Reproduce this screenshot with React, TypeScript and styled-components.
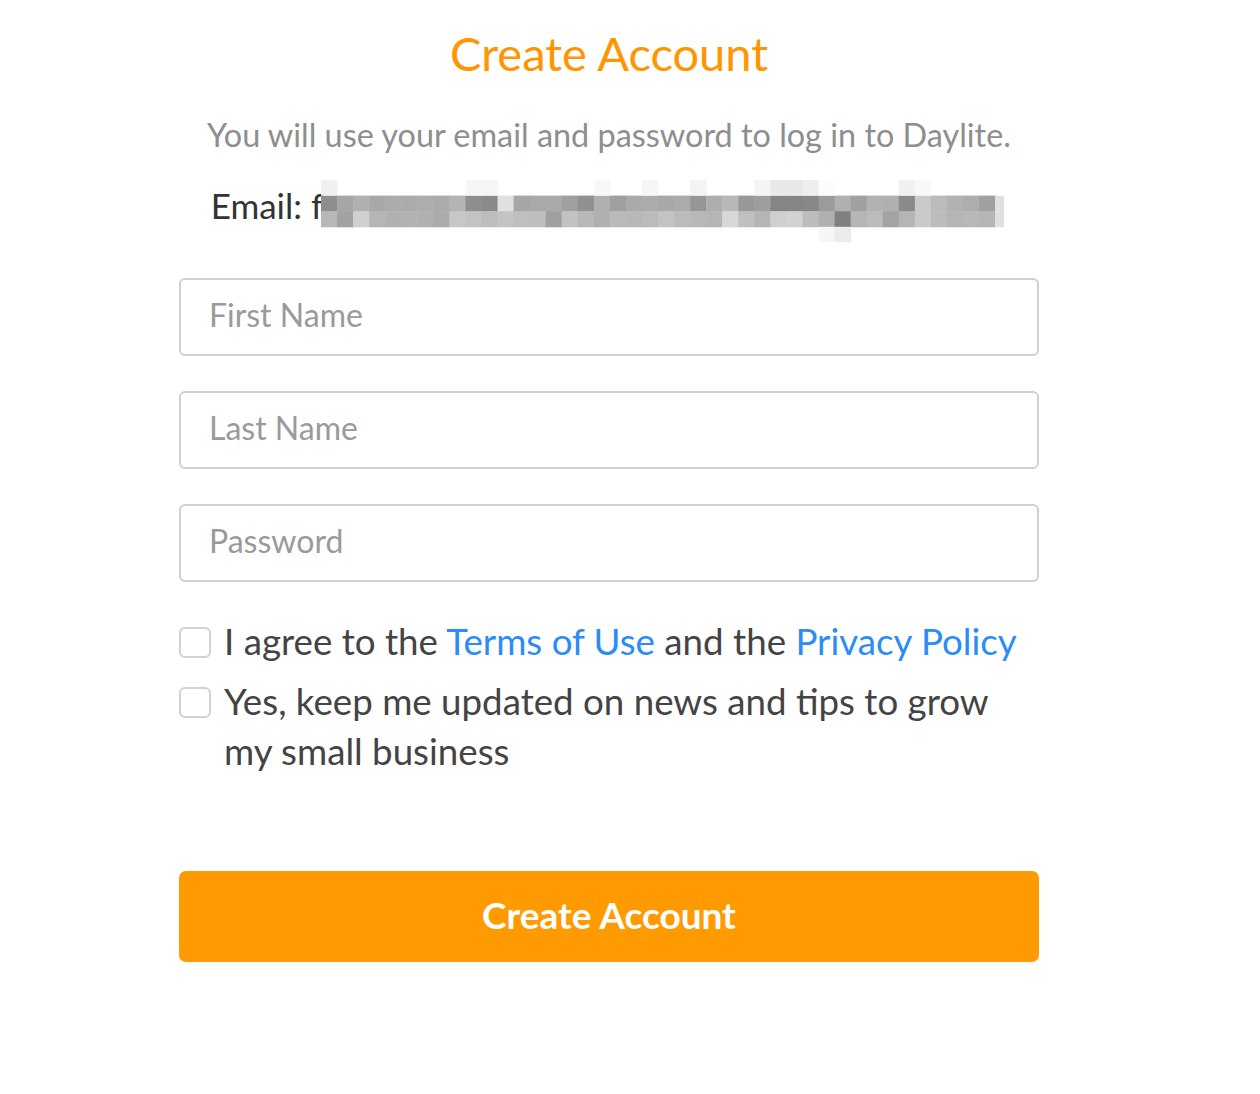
import React from "react";
import styled, { createGlobalStyle } from "styled-components";

const Global = createGlobalStyle`
  html, body { margin: 0; padding: 0; background: #ffffff; }
  body { font-family: "Lato", "Noto Sans", sans-serif; }
  * { box-sizing: border-box; }
`;

const Page = styled.div`
  width: 1218px;
  display: flex;
  flex-direction: column;
  align-items: center;
  padding-top: 23px;
`;

const Title = styled.h1`
  margin: 0;
  height: 60px;
  line-height: 60px;
  font-size: 47px;
  font-weight: 400;
  color: #ff9500;
  text-align: center;
`;

const Subtitle = styled.p`
  margin: 32px 0 0;
  height: 40px;
  line-height: 40px;
  font-size: 32.4px;
  color: #8e8e8e;
  text-align: center;
`;

const EmailRow = styled.div`
  margin-top: 30px;
  height: 40px;
  display: flex;
  align-items: center;
  font-size: 35px;
  color: #333;
`;

const EmailLabel = styled.span`
  line-height: 40px;
  white-space: pre;
`;

const Redacted = styled.svg`
  display: block;
  margin-left: -2px;
  margin-top: 12px;
  flex: none;
`;

const Form = styled.form`
  width: 860px;
  margin-top: 53px;
  display: flex;
  flex-direction: column;
`;

const Field = styled.input`
  width: 100%;
  height: 78px;
  border: 2px solid #d0d0d0;
  border-radius: 6px;
  padding: 0 28px 5px 28px;
  font-family: inherit;
  font-size: 32px;
  color: #333;
  outline: none;
  & + & { margin-top: 35px; }
  &::placeholder { color: #9a9a9a; }
`;

const Checks = styled.div`
  margin-top: 34px;
  display: flex;
  flex-direction: column;
  gap: 10px;
`;

const CheckRow = styled.label`
  display: flex;
  align-items: flex-start;
  gap: 13px;
  font-size: 36.7px;
  line-height: 50px;
  color: #444;
`;

const Box = styled.input`
  appearance: none;
  -webkit-appearance: none;
  flex: none;
  width: 32px;
  height: 31px;
  margin: 11px 0 0;
  border: 2px solid #d2d2d2;
  border-radius: 6px;
  background: #fff;
`;

const Link = styled.a`
  color: #2b8cf5;
  text-decoration: none;
`;

const Submit = styled.button`
  margin-top: 95px;
  width: 100%;
  height: 91px;
  border: none;
  border-radius: 7px;
  background: #ff9a00;
  color: #fff;
  font-family: inherit;
  font-size: 37px;
  font-weight: 700;
  padding-bottom: 6px;
`;

const row1 = [0x8e,0xa6,0xb0,0xa8,0xac,0xab,0xad,0xab,0xb4,0x8e,0x8a,0xe0,0xa6,0xa9,0xaa,0x9f,0x90,0xb0,0x9f,0xaa,0xab,0xa8,0xab,0x96,0xae,0xb8,0x98,0x9e,0x85,0x85,0x87,0x9b,0xb0,0xa0,0xb2,0xb0,0x8a,0xc9,0xbb,0xb2,0xae,0xa0,0xe0];
const row2 = [0xb8,0xa2,0xd0,0xb5,0xb0,0xb2,0xb0,0xab,0xc7,0xc3,0xbd,0xc3,0xbf,0xbe,0xa0,0xc2,0xb8,0xb0,0xba,0xb8,0xbb,0xc3,0xbb,0xb8,0xb5,0xd8,0xc0,0xb5,0xcf,0xd2,0xbc,0xb0,0x80,0xb5,0xbb,0xa3,0xb5,0xca,0xbc,0xb5,0xb8,0xb5,0xe0];
const top: Record<number, number> = { 0: 0xf0, 9: 0xf6, 10: 0xf6, 17: 0xf8, 20: 0xf6, 23: 0xf4, 27: 0xf4, 28: 0xe8, 29: 0xe8, 30: 0xee, 31: 0xfc, 36: 0xf0, 37: 0xf8 };
const bottom: Record<number, number> = { 31: 0xf6, 32: 0xec };

const gray = (v: number) => `rgb(${v},${v},${v})`;
const CW = 16.05;
const RH = 15.6;

function PixelBlock() {
  const cells: React.ReactElement[] = [];
  row1.forEach((v, i) => {
    const w = i === row1.length - 1 ? 9 : CW + 0.5;
    cells.push(<rect key={`a${i}`} x={i * CW} y={RH} width={w} height={RH + 0.5} fill={gray(v)} />);
    cells.push(<rect key={`b${i}`} x={i * CW} y={RH * 2} width={w} height={RH + 0.5} fill={gray(row2[i])} />);
  });
  Object.entries(top).forEach(([k, v]) => {
    cells.push(<rect key={`t${k}`} x={+k * CW} y={0} width={CW + 0.5} height={RH} fill={gray(v)} />);
  });
  Object.entries(bottom).forEach(([k, v]) => {
    cells.push(<rect key={`u${k}`} x={+k * CW} y={RH * 3} width={CW + 0.5} height={RH} fill={gray(v)} />);
  });
  return (
    <Redacted width={686} height={62} viewBox="0 0 686 62">
      {cells}
    </Redacted>
  );
}

export default function App() {
  return (
    <>
      <Global />
      <Page>
        <Title>Create Account</Title>
        <Subtitle>You will use your email and password to log in to Daylite.</Subtitle>
        <EmailRow>
          <EmailLabel>Email: f</EmailLabel>
          <PixelBlock />
        </EmailRow>
        <Form onSubmit={(e) => e.preventDefault()}>
          <Field type="text" placeholder="First Name" />
          <Field type="text" placeholder="Last Name" />
          <Field type="password" placeholder="Password" />
          <Checks>
            <CheckRow>
              <Box type="checkbox" />
              <span>
                I agree to the <Link href="#">Terms of Use</Link> and the <Link href="#">Privacy Policy</Link>
              </span>
            </CheckRow>
            <CheckRow>
              <Box type="checkbox" />
              <span>Yes, keep me updated on news and tips to grow my small business</span>
            </CheckRow>
          </Checks>
          <Submit type="submit">Create Account</Submit>
        </Form>
      </Page>
    </>
  );
}
